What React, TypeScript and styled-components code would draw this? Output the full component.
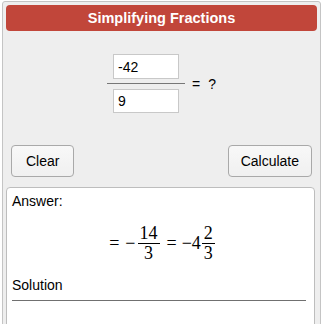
import styled, { createGlobalStyle } from "styled-components";

export const GlobalStyle = createGlobalStyle`
  body {
    margin: 0;
    background: #ffffff;
    font-family: "Liberation Sans", Arial, sans-serif;
  }
`;

const Widget = styled.div`
  box-sizing: border-box;
  width: 319px;
  height: 330px;
  margin: 1px 0 0 2px;
  padding: 3px 3px 0 3px;
  border: 1px solid #c4c4c4;
  border-radius: 3px;
  background: #eeeeee;
  overflow: hidden;
`;

const Header = styled.div`
  height: 26px;
  border-radius: 4px;
  background: #c1463a;
  color: #ffffff;
  font-weight: bold;
  font-size: 14.5px;
  display: flex;
  align-items: center;
  justify-content: center;
`;

const FractionRow = styled.div`
  display: flex;
  justify-content: center;
  align-items: center;
  gap: 7px;
  margin-top: 23px;
`;

const FractionInputs = styled.div`
  display: flex;
  flex-direction: column;
  align-items: center;
  width: 78px;
`;

const NumberInput = styled.input<{ $h: number }>`
  box-sizing: border-box;
  width: 66px;
  height: ${(p) => p.$h}px;
  border: 1px solid #c8c8c8;
  background: #ffffff;
  padding: 0 4px;
  font-family: "Liberation Sans", Arial, sans-serif;
  font-size: 14px;
  color: #000;
  outline: none;
`;

const Bar = styled.div`
  width: 100%;
  height: 1px;
  background: #777777;
  margin: 4px 0 5px;
`;

const Result = styled.span`
  font-size: 14px;
  color: #000;
  word-spacing: 4px;
`;

const ButtonRow = styled.div`
  display: flex;
  justify-content: space-between;
  padding: 0 5px;
  margin-top: 32px;
`;

const Button = styled.button<{ $pad: number }>`
  height: 32px;
  padding: 0 ${(p) => p.$pad}px;
  border: 1px solid #a9a9a9;
  border-radius: 4px;
  background: linear-gradient(#f8f8f8, #f0f0f0);
  font-family: "Liberation Sans", Arial, sans-serif;
  font-size: 14px;
  color: #000;
`;

const AnswerBox = styled.div`
  margin: 10px 2px 0 0;
  height: 160px;
  border: 1px solid #bdbdbd;
  border-radius: 4px;
  background: #ffffff;
  padding: 5px 5px 0 5px;
`;

const Label = styled.div`
  font-size: 14px;
  color: #000;
  line-height: 16px;
`;

const MathLine = styled.div`
  display: flex;
  justify-content: center;
  align-items: center;
  margin: 16px 0 15px 4px;
  font-family: "Liberation Serif", "Times New Roman", serif;
  font-size: 18px;
  color: #000;
`;

const Op = styled.span<{ $m: string }>`
  margin: ${(p) => p.$m};
`;

const Frac = styled.span`
  display: inline-flex;
  flex-direction: column;
  align-items: center;
  line-height: 17px;
  margin: 0 1px;
`;

const FracTop = styled.span`
  padding: 0 2px 1px;
  border-bottom: 1px solid #000;
`;

const FracBottom = styled.span`
  padding-top: 1px;
`;

const Divider = styled.div`
  height: 1px;
  background: #707070;
  margin: 7px 3px 0 0;
`;

export default function App() {
  return (
    <>
      <GlobalStyle />
      <Widget>
        <Header>Simplifying Fractions</Header>
        <FractionRow>
          <FractionInputs>
            <NumberInput $h={25} defaultValue="-42" />
            <Bar />
            <NumberInput $h={24} defaultValue="9" />
          </FractionInputs>
          <Result>= ?</Result>
        </FractionRow>
        <ButtonRow>
          <Button $pad={14}>Clear</Button>
          <Button $pad={12}>Calculate</Button>
        </ButtonRow>
        <AnswerBox>
          <Label>Answer:</Label>
          <MathLine>
            <Op $m="0 6px 0 0">=</Op>
            <Op $m="0 1px 0 0">−</Op>
            <Frac>
              <FracTop>14</FracTop>
              <FracBottom>3</FracBottom>
            </Frac>
            <Op $m="0 5px 0 6px">=</Op>
            <span>−4</span>
            <Frac>
              <FracTop>2</FracTop>
              <FracBottom>3</FracBottom>
            </Frac>
          </MathLine>
          <Label>Solution</Label>
          <Divider />
        </AnswerBox>
      </Widget>
    </>
  );
}
